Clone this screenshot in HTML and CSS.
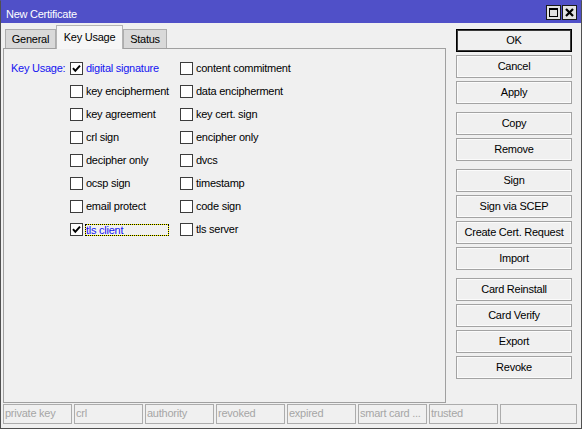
FILE: index.html
```html
<!DOCTYPE html>
<html>
<head>
<meta charset="utf-8">
<link rel="stylesheet" href="styles.css">
</head>
<body>
<div class="window">
  <div class="titlebar">
    <div class="title">New Certificate</div>
    <div class="controls">
      <div class="ctl"><svg width="13" height="13" viewBox="0 0 13 13"><rect x="2.5" y="2.5" width="8" height="8" fill="none" stroke="#000" stroke-width="1"/><rect x="2" y="2" width="9" height="2" fill="#000"/></svg></div>
      <div class="ctl"><svg width="13" height="13" viewBox="0 0 13 13"><path d="M3 3 L10 10 M10 3 L3 10" stroke="#000" stroke-width="2.2" fill="none"/></svg></div>
    </div>
  </div>
  <div class="main">
    <div class="left">
      <div class="tabs">
        <div class="tab t-general">General</div>
        <div class="tab active t-ku">Key Usage</div>
        <div class="tab t-status">Status</div>
      </div>
      <div class="panel">
        <div class="ku">
          <div class="ku-label">Key Usage:</div>
          <div class="item checked"><span class="cb"><svg width="11" height="11" viewBox="0 0 11 11"><path d="M2 5.2 L4.3 7.8 L9 2.6" stroke="#000" stroke-width="2" fill="none"/></svg></span><span class="txt">digital signature</span></div>
          <div class="item"><span class="cb"></span><span class="txt">content commitment</span></div>
          <div class="item c1"><span class="cb"></span><span class="txt">key encipherment</span></div>
          <div class="item"><span class="cb"></span><span class="txt">data encipherment</span></div>
          <div class="item c1"><span class="cb"></span><span class="txt">key agreement</span></div>
          <div class="item"><span class="cb"></span><span class="txt">key cert. sign</span></div>
          <div class="item c1"><span class="cb"></span><span class="txt">crl sign</span></div>
          <div class="item"><span class="cb"></span><span class="txt">encipher only</span></div>
          <div class="item c1"><span class="cb"></span><span class="txt">decipher only</span></div>
          <div class="item"><span class="cb"></span><span class="txt">dvcs</span></div>
          <div class="item c1"><span class="cb"></span><span class="txt">ocsp sign</span></div>
          <div class="item"><span class="cb"></span><span class="txt">timestamp</span></div>
          <div class="item c1"><span class="cb"></span><span class="txt">email protect</span></div>
          <div class="item"><span class="cb"></span><span class="txt">code sign</span></div>
          <div class="item c1 checked"><span class="cb"><svg width="11" height="11" viewBox="0 0 11 11"><path d="M2 5.2 L4.3 7.8 L9 2.6" stroke="#000" stroke-width="2" fill="none"/></svg></span><span class="txt focus">tls client</span></div>
          <div class="item"><span class="cb"></span><span class="txt">tls server</span></div>
        </div>
      </div>
    </div>
    <div class="buttons">
      <div class="btn default">OK</div>
      <div class="btn">Cancel</div>
      <div class="btn">Apply</div>
      <div class="btn grp">Copy</div>
      <div class="btn">Remove</div>
      <div class="btn grp">Sign</div>
      <div class="btn">Sign via SCEP</div>
      <div class="btn">Create Cert. Request</div>
      <div class="btn">Import</div>
      <div class="btn grp">Card Reinstall</div>
      <div class="btn">Card Verify</div>
      <div class="btn">Export</div>
      <div class="btn">Revoke</div>
    </div>
  </div>
  <div class="statusbar">
    <div class="field">private key</div>
    <div class="field">crl</div>
    <div class="field">authority</div>
    <div class="field">revoked</div>
    <div class="field">expired</div>
    <div class="field">smart card ...</div>
    <div class="field">trusted</div>
    <div class="field last"></div>
  </div>
</div>
</body>
</html>
```
FILE: styles.css
```css
html, body {
  margin: 0;
  padding: 0;
  background: #f0f0f0;
}
body {
  font-family: "Liberation Sans", Arial, sans-serif;
  font-size: 11px;
  letter-spacing: -0.25px;
  color: #000;
}
.window {
  width: 582px;
  height: 429px;
  box-sizing: border-box;
  border: 1px solid #505050;
  border-top-color: #5050c8;
  background: #f0f0f0;
  display: flex;
  flex-direction: column;
  overflow: hidden;
}
.titlebar {
  height: 22px;
  flex: none;
  background: #5050c8;
  display: flex;
  align-items: flex-start;
  justify-content: space-between;
  padding: 0 4px 0 5px;
}
.title {
  color: #fff;
  line-height: 13px;
  margin-top: 7px;
}
.controls {
  display: flex;
  gap: 1px;
  margin-top: 4px;
}
.ctl {
  width: 15px;
  height: 15px;
  box-sizing: border-box;
  border: 1px solid #1a1a1a;
  background: #e2e2e2;
  display: flex;
  align-items: center;
  justify-content: center;
}
.main {
  flex: none;
  height: 380px;
  display: flex;
  padding: 0 9px 0 2px;
  gap: 10px;
}
.left {
  width: 443px;
  display: flex;
  flex-direction: column;
  padding-top: 2px;
}
.tabs {
  display: flex;
  height: 23px;
  padding-left: 2px;
  align-items: flex-end;
}
.tab {
  box-sizing: border-box;
  height: 19px;
  border: 1px solid #adadad;
  border-bottom: none;
  background: #d9d9d9;
  display: flex;
  align-items: center;
  justify-content: center;
  line-height: 13px;
  padding-top: 1px;
}
.t-general { width: 51px; }
.t-ku { width: 67px; }
.t-status { width: 44px; }
.tab.active {
  height: 24px;
  background: #f6f6f6;
  position: relative;
  z-index: 1;
  margin-bottom: -1px;
  border-color: #b4b4b4;
  padding-top: 0;
  padding-bottom: 1px;
}
.panel {
  flex: 1;
  border: 1px solid #a0a0a0;
  background: #f0f0f0;
  padding: 8px 0 0 7px;
}
.ku {
  display: grid;
  grid-template-columns: 59px 110px auto;
  grid-auto-rows: 23px;
  align-items: center;
}
.ku-label {
  color: #1414f0;
  line-height: 13px;
}
.item {
  display: flex;
  align-items: center;
  gap: 3px;
}
.item.c1 {
  grid-column: 2;
}
.cb {
  width: 13px;
  height: 13px;
  box-sizing: border-box;
  border: 1px solid #3c3c3c;
  background: #fff;
  flex: none;
  display: flex;
  align-items: center;
  justify-content: center;
}
.txt {
  line-height: 13px;
  white-space: nowrap;
}
.checked .txt {
  color: #1414f0;
}
.txt.focus {
  flex: 1;
  margin-right: 11px;
  box-sizing: border-box;
  height: 12px;
  line-height: 10px;
  border: 1px dotted #000;
  background: linear-gradient(#f0f0f0, #f0f0f0) padding-box, linear-gradient(#ffff00, #ffff00) border-box;
  margin-left: -1px;
}
.buttons {
  width: 116px;
  display: flex;
  flex-direction: column;
  gap: 3px;
  padding-top: 6px;
}
.btn {
  height: 23px;
  box-sizing: border-box;
  border: 1px solid #a3a3a3;
  box-shadow: inset 0 0 0 1px #fbfbfb;
  background: #f0f0f0;
  display: flex;
  align-items: center;
  justify-content: center;
  line-height: 13px;
}
.btn.default {
  border-color: #000;
  box-shadow: inset 0 0 0 1px #3a3a3a;
}
.btn.grp {
  margin-top: 5px;
}
.statusbar {
  flex: 1;
  display: flex;
  gap: 2px;
  padding: 1px 4px 0 2px;
}
.field {
  width: 69px;
  height: 20px;
  box-sizing: border-box;
  border: 1px solid #acacac;
  color: #a6a6a6;
  line-height: 17px;
  padding-left: 1px;
  white-space: nowrap;
  overflow: hidden;
}
.field.last {
  flex: 1;
}
```
